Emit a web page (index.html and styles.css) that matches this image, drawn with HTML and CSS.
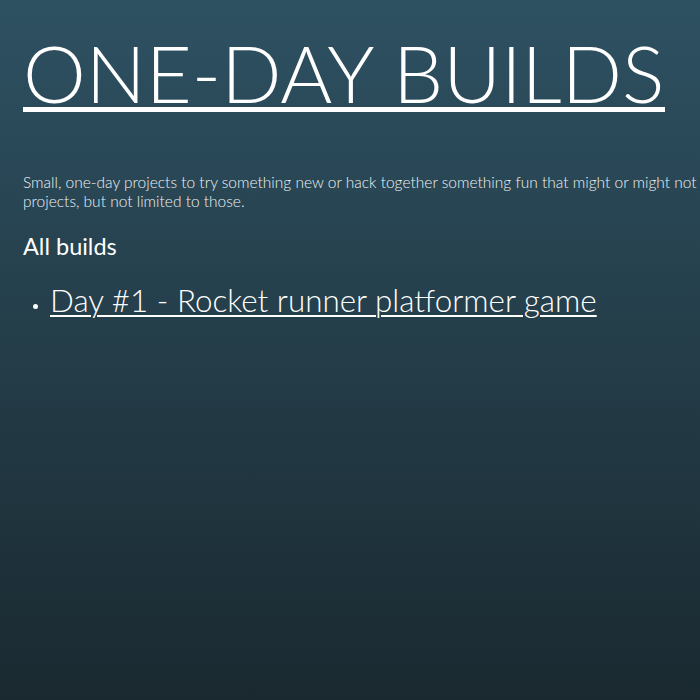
FILE: index.html
```html
<!DOCTYPE html>
<html lang="en">
<head>
<meta charset="utf-8">
<title>One-Day Builds</title>
<link rel="stylesheet" href="styles.css">
</head>
<body>
<main class="page">
  <h1 class="title"><span class="title-text">ONE-DAY BUILDS</span></h1>
  <p class="intro">Small, one-day projects to try something new or hack together something fun that might or might not projects, but not limited to those.</p>
  <h2 class="section">All builds</h2>
  <ul class="builds">
    <li class="build"><a href="#" class="build-link">Day #1 - Rocket runner platformer game</a></li>
  </ul>
</main>
</body>
</html>
```

FILE: styles.css
```css
html {
  overflow: hidden;
  min-height: 100%;
  background: linear-gradient(to bottom, #2e5162 0%, #1a2930 100%);
}
body {
  margin: 0;
  min-height: 700px;
  color: #ffffff;
  font-family: Lato, "Open Sans", sans-serif;
  font-weight: 300;
  overflow: hidden;
}
.page {
  padding: 0 23px;
}
.title {
  margin: 27px 0 0;
  font-size: 79.4px;
  font-weight: 300;
  line-height: 1.15;
  white-space: nowrap;
}
.title-text {
  display: inline-block;
  border-bottom: 5px solid #ffffff;
  line-height: 0.86;
}
.intro {
  width: 700px;
  margin: 55px 0 0;
  font-size: 15.5px;
  line-height: 19px;
  color: #eef2f4;
}
.section {
  margin: 21px 0 0;
  font-size: 23.5px;
  font-weight: 400;
  line-height: 1.2;
}
.builds {
  margin: 20px 0 0;
  padding-left: 27px;
  font-size: 15px;
}
.build-link {
  font-size: 31.4px;
  color: #ffffff;
  text-decoration: underline;
  text-decoration-thickness: 2px;
  text-underline-offset: 3px;
}
```
